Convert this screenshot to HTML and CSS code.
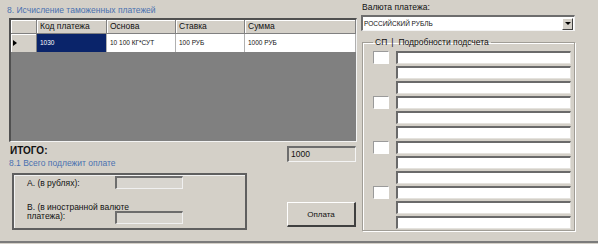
FILE: index.html
```html
<!DOCTYPE html>
<html lang="ru">
<head>
    <meta charset="UTF-8">
    <title>Исчисление таможенных платежей</title>
    <link rel="stylesheet" href="styles.css">
</head>
<body>
    <div class="form">
        <div class="left">
            <div class="title">8. Исчисление таможенных платежей</div>

            <div class="grid">
                <div class="grid-head">
                    <div class="rh"></div>
                    <div>Код платежа</div>
                    <div>Основа</div>
                    <div>Ставка</div>
                    <div>Сумма</div>
                </div>
                <div class="grid-row">
                    <div class="rh"><span class="arrow"></span></div>
                    <div class="sel">1030</div>
                    <div>10 100 КГ*СУТ</div>
                    <div>100 РУБ</div>
                    <div>1000 РУБ</div>
                </div>
            </div>

            <div class="summary">
                <div class="sum-left">
                    <div class="total-label">ИТОГО:</div>
                    <div class="subtitle">8.1 Всего подлежит оплате</div>
                    <div class="paybox">
                        <div class="pay-row">
                            <span class="pay-label">A. (в рублях):</span>
                            <span class="field"></span>
                        </div>
                        <div class="pay-row pay-row-b">
                            <span class="pay-label">B. (в иностранной валюте<br>платежа):</span>
                            <span class="field"></span>
                        </div>
                    </div>
                </div>
                <div class="sum-right">
                    <div class="total-box">1000</div>
                    <button class="pay-btn">Оплата</button>
                </div>
            </div>
        </div>

        <div class="right">
            <div class="currency-label">Валюта платежа:</div>
            <div class="combo">
                <span>РОССИЙСКИЙ РУБЛЬ</span>
                <span class="combo-btn"><span class="down"></span></span>
            </div>

            <fieldset class="details">
                <legend><span>СП</span><span class="bar">|</span><span>Подробности подсчета</span></legend>
                <div class="rows">
                    <div class="group">
                        <span class="check"></span>
                        <div class="lines"><span class="line"></span><span class="line"></span><span class="line"></span></div>
                    </div>
                    <div class="group">
                        <span class="check"></span>
                        <div class="lines"><span class="line"></span><span class="line"></span><span class="line"></span></div>
                    </div>
                    <div class="group">
                        <span class="check"></span>
                        <div class="lines"><span class="line"></span><span class="line"></span><span class="line"></span></div>
                    </div>
                    <div class="group">
                        <span class="check"></span>
                        <div class="lines"><span class="line"></span><span class="line"></span><span class="line"></span></div>
                    </div>
                </div>
            </fieldset>
        </div>
    </div>
</body>
</html>
```

FILE: styles.css
```css
body {
    margin: 0;
    background-color: #d4d0c8;
    font-family: "Liberation Sans", Arial, sans-serif;
    font-size: 8.5px;
    color: #111;
}

.form {
    display: flex;
    height: 241px;
    border-bottom: 2px solid #7b7b7b;
}

.left {
    width: 362px;
}

.title {
    height: 17px;
    padding: 1px 0 0 7px;
    line-height: 18px;
    color: #4a70b0;
}

/* data grid */
.grid {
    margin-left: 9px;
    width: 348px;
    height: 124px;
    box-sizing: border-box;
    background-color: #808080;
    border-style: solid;
    border-width: 2px 1px 1px 2px;
    border-color: #505050 #f4f4f4 #f4f4f4 #505050;
}

.grid-head,
.grid-row {
    display: grid;
    grid-template-columns: 26px 70px 69px 69px 1fr;
}

.grid-head {
    height: 14px;
}

.grid-head div {
    background-color: #d4d0c8;
    border-right: 1px solid #808080;
    border-bottom: 1px solid #808080;
    box-shadow: inset 1px 1px #fff;
    padding-left: 3px;
    line-height: 13px;
    white-space: nowrap;
    overflow: hidden;
}

.grid-row {
    height: 18px;
}

.grid-row div {
    background-color: #fff;
    border-right: 1px solid #b0b0b0;
    padding-left: 3px;
    font-size: 6.5px;
    line-height: 18px;
    white-space: nowrap;
}

.grid-row .sel {
    background-color: #0a246a;
    color: #fff;
}

.grid-row .rh {
    display: flex;
    align-items: center;
    padding-left: 2px;
    background-color: #d4d0c8;
    border-right-color: #808080;
    box-shadow: inset 1px 1px #fff;
}

.arrow {
    border-left: 4px solid #000;
    border-top: 3px solid transparent;
    border-bottom: 3px solid transparent;
}

/* totals */
.summary {
    display: flex;
    margin-top: 4px;
}

.sum-left {
    width: 287px;
}

.total-label {
    margin-left: 10px;
    height: 10px;
    font-size: 10px;
    line-height: 10px;
    font-weight: bold;
}

.subtitle {
    margin: 2px 0 0 9px;
    line-height: 10px;
    color: #4a70b0;
}

.paybox {
    margin: 5px 0 0 12px;
    width: 235px;
    height: 57px;
    box-sizing: border-box;
    padding: 1px 0 0 13px;
    border: 2px solid #5f5f5f;
    box-shadow: inset 1px 1px #f2f2f2;
}

.pay-row {
    display: flex;
    align-items: center;
    height: 13px;
}

.pay-label {
    width: 88px;
    white-space: nowrap;
}

.pay-row-b {
    margin-top: 14px;
    height: 21px;
    align-items: flex-end;
}

.pay-row-b .pay-label {
    align-self: flex-start;
    line-height: 9px;
}

.field {
    width: 68px;
    height: 13px;
    box-sizing: border-box;
    background-color: #d8d5cf;
    border-style: solid;
    border-width: 2px 1px 1px 2px;
    border-color: #6d6d6d #f0f0f0 #f0f0f0 #6d6d6d;
}

.sum-right {
    width: 69px;
}

.total-box {
    height: 16px;
    box-sizing: border-box;
    padding-left: 2px;
    line-height: 13px;
    border-style: solid;
    border-width: 2px 1px 1px 2px;
    border-color: #6d6d6d #f4f4f4 #f4f4f4 #6d6d6d;
}

.pay-btn {
    display: block;
    margin-top: 40px;
    width: 69px;
    height: 25px;
    box-sizing: border-box;
    padding: 0;
    background-color: #d4d0c8;
    font-family: inherit;
    font-size: 8px;
    color: #111;
    border-style: solid;
    border-width: 1px 2px 2px 1px;
    border-color: #fff #404040 #404040 #fff;
}

/* right side */
.right {
    width: 236px;
}

.currency-label {
    margin-top: 2px;
    line-height: 11px;
}

.combo {
    display: flex;
    align-items: center;
    justify-content: space-between;
    margin: 2px 0 0 -1px;
    width: 214px;
    height: 16px;
    box-sizing: border-box;
    padding-left: 1px;
    background-color: #fff;
    font-size: 6.5px;
    border-style: solid;
    border-width: 2px 1px 1px 2px;
    border-color: #6d6d6d #f4f4f4 #f4f4f4 #6d6d6d;
}

.combo-btn {
    display: flex;
    align-items: center;
    justify-content: center;
    margin-right: 1px;
    width: 11px;
    height: 12px;
    box-sizing: border-box;
    background-color: #d4d0c8;
    border: 1px solid;
    border-color: #fff #404040 #404040 #fff;
}

.down {
    border-top: 3px solid #000;
    border-left: 3px solid transparent;
    border-right: 3px solid transparent;
}

.details {
    margin: 6px 0 0;
    padding: 4px 0 1px 10px;
    width: 213px;
    min-width: 0;
    box-sizing: border-box;
    border: 1px solid #a09d96;
    box-shadow: 1px 1px 0 #fff, inset 1px 1px 0 #fff;
}

.details legend {
    padding: 0 2px;
    line-height: 10px;
}

.details .bar {
    display: inline-block;
    margin: 0 5px 0 4px;
}

.rows {
    display: flex;
    flex-direction: column;
    gap: 2px;
}

.group {
    display: flex;
    gap: 7px;
}

.check {
    width: 16px;
    height: 13px;
    box-sizing: border-box;
    background-color: #fff;
    border: 1px solid;
    border-color: #9a9a9a #fff #fff #9a9a9a;
}

.lines {
    display: flex;
    flex-direction: column;
    gap: 2px;
}

.line {
    width: 175px;
    height: 13px;
    box-sizing: border-box;
    background-color: #fff;
    border-style: solid;
    border-width: 2px 1px 1px 2px;
    border-color: #6a6a6a #e4e2dd #e4e2dd #6a6a6a;
}
```
